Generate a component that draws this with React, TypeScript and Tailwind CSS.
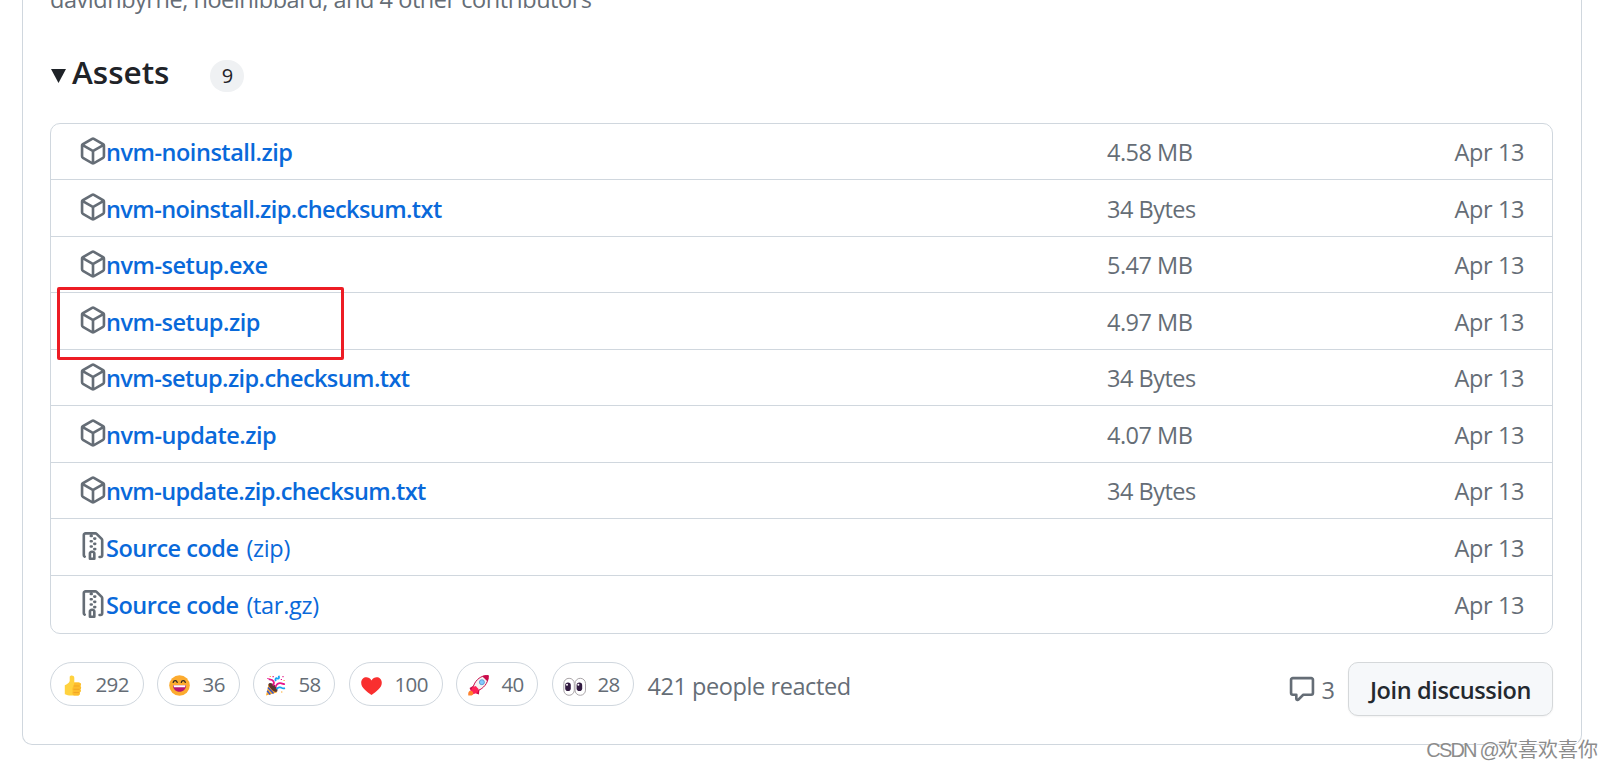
import React from 'react';

interface Asset {
    name: string;
    suffix?: string;
    size?: string;
    date: string;
    kind: 'package' | 'archive';
}

const assets: Asset[] = [
    { name: 'nvm-noinstall.zip', size: '4.58 MB', date: 'Apr 13', kind: 'package' },
    { name: 'nvm-noinstall.zip.checksum.txt', size: '34 Bytes', date: 'Apr 13', kind: 'package' },
    { name: 'nvm-setup.exe', size: '5.47 MB', date: 'Apr 13', kind: 'package' },
    { name: 'nvm-setup.zip', size: '4.97 MB', date: 'Apr 13', kind: 'package' },
    { name: 'nvm-setup.zip.checksum.txt', size: '34 Bytes', date: 'Apr 13', kind: 'package' },
    { name: 'nvm-update.zip', size: '4.07 MB', date: 'Apr 13', kind: 'package' },
    { name: 'nvm-update.zip.checksum.txt', size: '34 Bytes', date: 'Apr 13', kind: 'package' },
    { name: 'Source code', suffix: '(zip)', date: 'Apr 13', kind: 'archive' },
    { name: 'Source code', suffix: '(tar.gz)', date: 'Apr 13', kind: 'archive' },
];

const PackageIcon: React.FC = () => (
    <svg className="size-7 shrink-0 fill-[#656d76]" viewBox="0 0 16 16">
        <path d="m8.878.392 5.25 3.045c.54.314.872.89.872 1.514v6.098a1.75 1.75 0 0 1-.872 1.514l-5.25 3.045a1.75 1.75 0 0 1-1.756 0l-5.25-3.045A1.75 1.75 0 0 1 1 11.049V4.951c0-.624.332-1.201.872-1.514L7.122.392a1.75 1.75 0 0 1 1.756 0ZM7.875 1.69l-4.63 2.685L8 7.133l4.755-2.758-4.63-2.685a.248.248 0 0 0-.25 0ZM2.5 5.677v5.372c0 .09.047.171.125.216l4.625 2.683V8.432Zm6.25 8.271 4.625-2.683a.25.25 0 0 0 .125-.216V5.677L8.75 8.432Z" />
    </svg>
);

const FileZipIcon: React.FC = () => (
    <svg className="size-7 shrink-0 fill-[#656d76]" viewBox="0 0 16 16">
        <path d="M3.5 1.75v11.5c0 .09.048.173.126.217a.75.75 0 0 1-.752 1.298A1.748 1.748 0 0 1 2 13.25V1.75C2 .784 2.784 0 3.75 0h5.586c.464 0 .909.185 1.237.513l2.914 2.914c.329.328.513.773.513 1.237v8.586A1.75 1.75 0 0 1 12.25 15h-.5a.75.75 0 0 1 0-1.5h.5a.25.25 0 0 0 .25-.25V4.664a.25.25 0 0 0-.073-.177L9.513 1.573a.25.25 0 0 0-.177-.073H7.25a.75.75 0 0 1 0 1.5h-.5a.75.75 0 0 1 0-1.5h-3a.25.25 0 0 0-.25.25Zm3.75 8.75h.5c.966 0 1.75.784 1.75 1.75v3a.75.75 0 0 1-.75.75h-2.5a.75.75 0 0 1-.75-.75v-3c0-.966.784-1.75 1.75-1.75ZM6 5.25a.75.75 0 0 1 .75-.75h.5a.75.75 0 0 1 0 1.5h-.5A.75.75 0 0 1 6 5.25Zm.75 2.25h.5a.75.75 0 0 1 0 1.5h-.5a.75.75 0 0 1 0-1.5ZM8 6.75A.75.75 0 0 1 8.75 6h.5a.75.75 0 0 1 0 1.5h-.5A.75.75 0 0 1 8 6.75ZM8.75 3h.5a.75.75 0 0 1 0 1.5h-.5a.75.75 0 0 1 0-1.5ZM8 9.75A.75.75 0 0 1 8.75 9h.5a.75.75 0 0 1 0 1.5h-.5A.75.75 0 0 1 8 9.75Zm-1 2.5v2.25h1v-2.25a.25.25 0 0 0-.25-.25h-.5a.25.25 0 0 0-.25.25Z" />
    </svg>
);

const CommentIcon: React.FC = () => (
    <svg className="size-7 fill-[#656d76]" viewBox="0 0 16 16">
        <path d="M1 2.75C1 1.784 1.784 1 2.75 1h10.5c.966 0 1.75.784 1.75 1.75v7.5A1.75 1.75 0 0 1 13.25 12H9.06l-2.573 2.573A1.458 1.458 0 0 1 4 13.543V12H2.75A1.75 1.75 0 0 1 1 10.25Zm1.75-.25a.25.25 0 0 0-.25.25v7.5c0 .138.112.25.25.25h2a.75.75 0 0 1 .75.75v2.19l2.72-2.72a.749.749 0 0 1 .53-.22h4.5a.25.25 0 0 0 .25-.25v-7.5a.25.25 0 0 0-.25-.25Z" />
    </svg>
);

const ThumbsUp: React.FC = () => (
    <svg className="size-[21px]" viewBox="0 0 21 21">
        <path d="M2.8 10.2C5 9.4 7 8 7.7 6V2c0-2 4.6-2.2 4.6.8v4.6h4.2c3 0 3 3.2 1.5 3.5 1.6.7 1.4 3 .2 3.4 1 .8.7 2.8-.6 3.1.7 1.4-.2 3.1-1.8 3.1H7c-1.5 0-2.7-.8-4.2-1.2Z" fill="#ffd23f" />
        <path d="M12.3 7.4h4.2c3 0 3 3.2 1.5 3.5 1.6.7 1.4 3 .2 3.4 1 .8.7 2.8-.6 3.1.7 1.4-.2 3.1-1.8 3.1h-4c-1.6-1-1.8-3-1-4.5-.8-1.6-.6-3.6.8-4.5Z" fill="#fdbd2e" />
        <path d="M11.5 11h6M11.5 14.3h6M11.5 17.5h5.6" stroke="#eb9b24" strokeWidth=".7" />
    </svg>
);

const Laugh: React.FC = () => (
    <svg className="size-[21px]" viewBox="0 0 21 21">
        <circle cx="10.5" cy="10.5" r="10.3" fill="#fcab2f" />
        <path d="M4.2 7.4c.6-2.4 3.4-2.4 4 0M12.3 7.4c.6-2.4 3.4-2.4 4 0" fill="none" stroke="#2b2523" strokeWidth="1.3" strokeLinecap="round" />
        <path d="M4 10.2h13c0 4-2.8 6.5-6.5 6.5S4 14.2 4 10.2Z" fill="#b8166f" />
        <path d="M4.5 10.2h12l-.5 2.1H5Z" fill="#fff" />
    </svg>
);

const Party: React.FC = () => (
    <svg className="size-[21px]" viewBox="0 0 21 21">
        <path d="M3.6 9 12 17.5 1 20.6Z" fill="#fcab2f" />
        <path d="m3 12.5 5.5 6M2.2 15.8l3 3.8" stroke="#3553c9" strokeWidth="1.5" />
        <path d="M3.5 9c.8-2 5-.3 7 2s2.6 5 1.4 5.8c-1.6.6-4-.8-5.8-2.8S3 10.2 3.5 9Z" fill="#5b3530" />
        <path d="M7.8 10.5C9.5 8.5 9.5 6.5 7 5l-3.3-.8M10.5 12c1.3-3.2 3.6-4.2 6-3.6 1 .3 1.6 1 3.3.4" fill="none" stroke="#e6158a" strokeWidth="1.8" />
        <path d="M10.8 6.2c-1-2.2.2-3.3 1.3-2.8 1.9.8 2.3-.6 1.6-2.7M11.5 14.2c1.5-2 4-2.3 5.2-1.3 1 .8 2 .7 3.3.2" fill="none" stroke="#18a4f2" strokeWidth="1.8" />
        <path d="M2.3 3.5h1.3M7.5 1.6h1.3M15.8 4.5H17M17.4 1.7h1.2" stroke="#e6158a" strokeWidth="1.2" />
        <path d="M4.7 1.5h1.2M18.5 5.5h1.2M16 17h1.4" stroke="#fcab2f" strokeWidth="1.2" />
    </svg>
);

const Heart: React.FC = () => (
    <svg className="size-[21px]" viewBox="0 0 21 21">
        <path d="M10.5 20C6 16.6.2 13 .2 7.7.2 1.5 7.6.2 10.5 5.4 13.4.2 20.8 1.5 20.8 7.7 20.8 13 15 16.6 10.5 20Z" fill="#f92f2f" />
    </svg>
);

const Rocket: React.FC = () => (
    <svg className="size-[21px]" viewBox="0 0 21 21">
        <path d="M6.2 10.3 1.6 13l1.3 3.2 5-2ZM11.5 13.8l-.6 5.6-3.4-1.1-1.5-3Z" fill="#ca0b4a" />
        <path d="M20.3.6c-5-.6-10.6 2.3-13.5 7.5L4 14l3 2.8 5-2.2C17.2 11.8 20.7 6 20.3.6Z" fill="#f4f4f4" stroke="#ca0b4a" strokeWidth="1" />
        <path d="M20.4.4c-2.3-.3-4.4 0-6.3.9 1.7 1.6 3.7 3.6 5.4 5.2.8-2 1.1-4.1.9-6.1Z" fill="#ca0b4a" />
        <circle cx="13.9" cy="7.2" r="2.5" fill="#83cbff" stroke="#5290c9" strokeWidth=".8" />
        <path d="m2.8 15.8 2-3.7 3-1 1.3 1.5 1.5 1.5-.8 3.2-4.3 1.9Z" fill="#ff2257" />
        <path d="M1.3 16.2c2-1.2 4.6.8 3.8 3.2-.7 1.1-2.7 1.3-4.8 1.2-.2-1.9-.1-3.8 1-4.4Z" fill="#ff822d" />
    </svg>
);

const Eyes: React.FC = () => (
    <svg className="size-[21px] overflow-visible" viewBox="0 0 21 21">
        <rect x="11" y="3.3" width="10.5" height="17" rx="5.2" fill="#fff" stroke="#aaa5a8" />
        <rect x="-.2" y="3.3" width="10.5" height="17" rx="5.2" fill="#fff" stroke="#aaa5a8" />
        <rect x="1.2" y="7.6" width="5.6" height="8.4" rx="2.8" fill="#321b41" />
        <rect x="12.6" y="7.6" width="5.6" height="8.4" rx="2.8" fill="#321b41" />
        <circle cx="3" cy="9.8" r="1" fill="#fff" />
        <circle cx="14.4" cy="9.8" r="1" fill="#fff" />
    </svg>
);

const reactions = [
    { icon: <ThumbsUp />, count: 292 },
    { icon: <Laugh />, count: 36 },
    { icon: <Party />, count: 58 },
    { icon: <Heart />, count: 100 },
    { icon: <Rocket />, count: 40 },
    { icon: <Eyes />, count: 28 },
];

const AssetRow: React.FC<{ asset: Asset }> = ({ asset }) => (
    <li className="flex h-14 items-center border-b border-[#d0d7de] pr-7 pl-[27.5px] last:h-[57px] last:border-b-0 even:h-[57px]">
        <div className="-mt-[2px]">
            {asset.kind === 'package' ? <PackageIcon /> : <FileZipIcon />}
        </div>
        <a href="#" className="-ml-[0.5px] flex-1 pt-px text-[#0969da]">
            <span className={asset.name.endsWith('.txt') ? 'font-semibold tracking-[-0.58px]' : 'font-semibold tracking-[-0.48px]'}>{asset.name}</span>
            {asset.suffix && <span className="ml-[2px] tracking-[-0.3px]"> {asset.suffix}</span>}
        </a>
        <span className="w-[340px] pt-px text-[#656d76]">{asset.size}</span>
        <span className="w-[77px] pt-px text-right tracking-[-0.4px] text-[#656d76]">{asset.date}</span>
    </li>
);

const App: React.FC = () => {
    return (
        <div className="relative h-[769px] overflow-hidden bg-white pl-[22px] font-['Open_Sans','Noto_Sans',sans-serif] text-[23.5px] leading-9 tracking-[-0.5px] text-[#1f2328]">
            <div className="flex h-[745px] w-[1560px] flex-col rounded-b-[10px] border border-t-0 border-[#d0d7de] px-[27px]">
                <p className="-mt-[19px] tracking-[-0.46px] text-[#656d76]">davidnbyrne, noelhibbard, and 4 other contributors</p>

                <div className="mt-[30px] flex h-[54px] items-center">
                    <svg className="mt-[3px] ml-[0.5px] h-[14px] w-[15px] fill-[#1f2328]" viewBox="0 0 15 14">
                        <path d="M0 0h15L7.5 14Z" />
                    </svg>
                    <h3 className="-mt-[5px] ml-[6.5px] text-[31.5px] font-semibold tracking-normal">Assets</h3>
                    <span className="mt-[3px] ml-[41px] flex h-8 w-[34px] items-center justify-center rounded-full bg-[#eff1f3] text-[20px] font-medium tracking-normal">9</span>
                </div>

                <ul className="mt-[22px] w-[1503px] rounded-[10px] border border-[#d0d7de]">
                    {assets.map((asset) => (
                        <AssetRow key={asset.name + (asset.suffix ?? '')} asset={asset} />
                    ))}
                </ul>

                <div className="mt-7 flex w-[1503px] items-start justify-between">
                    <div className="flex items-center gap-[13.5px]">
                        {reactions.map(({ icon, count }) => (
                            <button key={count} className="flex h-11 items-center rounded-full border border-[#d0d7de] pr-[13.7px] pl-[11px] text-[20.5px] tracking-[-0.6px] text-[#656d76]">
                                <span className="mt-[3px] mr-[12.5px]">{icon}</span>
                                <span>{count}</span>
                            </button>
                        ))}
                        <span className="mt-[3px] -ml-[0.5px] tracking-[-0.42px] text-[#656d76]">421 people reacted</span>
                    </div>
                    <div className="flex items-center text-[#656d76]">
                        <CommentIcon />
                        <span className="mt-[2px] ml-[5.5px]">3</span>
                        <button className="ml-[13.5px] h-[54px] w-[205px] rounded-[10px] border border-[#d5d8da] bg-[#f6f8fa] pt-[2px] font-semibold tracking-[-0.38px] text-[#24292f] shadow-xs">Join discussion</button>
                    </div>
                </div>
            </div>

            {/* highlight around the installer row */}
            <div className="absolute top-[287px] left-[57px] h-[73px] w-[287px] rounded-xs border-3 border-[#ed1c24]" />
            <div className="absolute right-[15px] bottom-px font-['Liberation_Sans','Noto_Sans_CJK_SC',sans-serif] text-[20px] text-[#8c8c8c] [text-shadow:1px_1px_0_#fff]">
                <span className="tracking-[-1.8px]">CSDN @</span>
                <span className="font-['Noto_Sans_CJK_SC',sans-serif] tracking-normal">欢喜欢喜你</span>
            </div>
        </div>
    );
};

export default App;
